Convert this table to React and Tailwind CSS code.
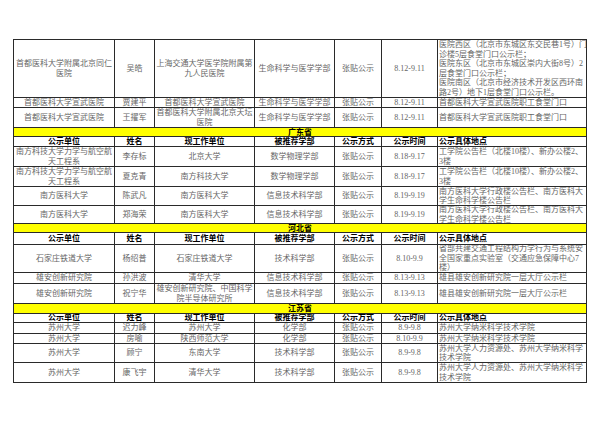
import React from "react";

// column widths in px: 公示单位 / 姓名 / 现工作单位 / 被推荐学部 / 公示方式 / 公示时间 / 公示具体地点
const cols = "grid-cols-[101px_40px_100px_80px_47px_56px_149px]";

const rows = [
  { h: "h-[58px]", c: [["首都医科大学附属北京同仁", "医院"], ["吴皓"], ["上海交通大学医学院附属第", "九人民医院"], ["生命科学与医学学部"], ["张贴公示"], ["8.12-9.11"], ["医院西区（北京市东城区东交民巷1号）门", "诊楼5层食堂门口公示栏；", "医院东区（北京市东城区崇内大街8号）2", "层食堂门口公示栏；", "医院南区（北京市经济技术开发区西环南", "路2号）地下1层食堂门口公示栏。"]] },
  { h: "h-[10px]", c: [["首都医科大学宣武医院"], ["贾建平"], ["首都医科大学宣武医院"], ["生命科学与医学学部"], ["张贴公示"], ["8.12-9.11"], ["首都医科大学宣武医院职工食堂门口"]] },
  { h: "h-[20px]", c: [["首都医科大学宣武医院"], ["王擢军"], ["首都医科大学附属北京天坛", "医院"], ["生命科学与医学学部"], ["张贴公示"], ["8.12-9.11"], ["首都医科大学宣武医院职工食堂门口"]] },
  { prov: "广东省", h: "h-[9px]" },
  { head: true, h: "h-[10px]" },
  { h: "h-[20px]", c: [["南方科技大学力学与航空航", "天工程系"], ["李存标"], ["北京大学"], ["数学物理学部"], ["张贴公示"], ["8.18-9.17"], ["工学院公告栏（北楼10楼）、新办公楼2、", "3楼"]] },
  { h: "h-[20px]", c: [["南方科技大学力学与航空航", "天工程系"], ["夏克青"], ["南方科技大学"], ["数学物理学部"], ["张贴公示"], ["8.18-9.17"], ["工学院公告栏（北楼10楼）、新办公楼2、", "3楼"]] },
  { h: "h-[19px]", c: [["南方医科大学"], ["陈武凡"], ["南方医科大学"], ["信息技术科学部"], ["张贴公示"], ["8.19-9.19"], ["南方医科大学行政楼公告栏、南方医科大", "学生命科学楼公告栏"]] },
  { h: "h-[18px]", c: [["南方医科大学"], ["郑海荣"], ["南方医科大学"], ["信息技术科学部"], ["张贴公示"], ["8.19-9.19"], ["南方医科大学行政楼公告栏、南方医科大", "学生命科学楼公告栏"]] },
  { prov: "河北省", h: "h-[9px]" },
  { head: true, h: "h-[12px]" },
  { h: "h-[28px]", c: [["石家庄铁道大学"], ["杨绍普"], ["石家庄铁道大学"], ["技术科学部"], ["张贴公示"], ["8.10-9.9"], ["省部共建交通工程结构力学行为与系统安", "全国家重点实验室（交通应急保障中心7", "楼）"]] },
  { h: "h-[11px]", c: [["雄安创新研究院"], ["孙洪波"], ["清华大学"], ["信息技术科学部"], ["张贴公示"], ["8.13-9.13"], ["雄县雄安创新研究院一层大厅公示栏"]] },
  { h: "h-[20px]", c: [["雄安创新研究院"], ["祝宁华"], ["雄安创新研究院、中国科学", "院半导体研究所"], ["信息技术科学部"], ["张贴公示"], ["8.13-9.13"], ["雄县雄安创新研究院一层大厅公示栏"]] },
  { prov: "江苏省", h: "h-[10px]" },
  { head: true, h: "h-[9px]" },
  { h: "h-[11px]", c: [["苏州大学"], ["迟力峰"], ["苏州大学"], ["化学部"], ["张贴公示"], ["8.9-9.8"], ["苏州大学纳米科学技术学院"]] },
  { h: "h-[10px]", c: [["苏州大学"], ["房喻"], ["陕西师范大学"], ["化学部"], ["张贴公示"], ["8.10-9.9"], ["苏州大学纳米科学技术学院"]] },
  { h: "h-[19px]", c: [["苏州大学"], ["顾宁"], ["东南大学"], ["技术科学部"], ["张贴公示"], ["8.9-9.8"], ["苏州大学人力资源处、苏州大学纳米科学", "技术学院"]] },
  { h: "h-[20px]", c: [["苏州大学"], ["康飞宇"], ["清华大学"], ["技术科学部"], ["张贴公示"], ["8.9-9.8"], ["苏州大学人力资源处、苏州大学纳米科学", "技术学院"]] },
];

const headers = ["公示单位", "姓名", "现工作单位", "被推荐学部", "公示方式", "公示时间", "公示具体地点"];

function Cell({ lines, last, bold }) {
  return (
    <div
      className={
        "border-r border-b border-[#2a2a2a] overflow-hidden flex items-center whitespace-nowrap leading-[9.5px] " +
        (last ? "justify-start text-left pl-[1px]" : "justify-center text-center") +
        (bold ? " font-bold text-black" : " text-[#666]")
      }
    >
      <div>
        {lines.map((l, i) => (
          <React.Fragment key={i}>
            {i > 0 && <br />}
            {l}
          </React.Fragment>
        ))}
      </div>
    </div>
  );
}

export default function App() {
  return (
    <div className="w-[599px] h-[423px] bg-white pt-[39px] pl-[13px] text-[8px] font-['Liberation_Serif','Noto_Sans_CJK_SC',serif]">
      <div className="w-[574px] border-l border-t border-[#2a2a2a]">
        {rows.map((r, i) => {
          if (r.prov) {
            return (
              <div
                key={i}
                className={`${r.h} bg-[#ffff00] border-r border-b border-[#2a2a2a] flex items-center justify-center font-bold text-black leading-[9px] overflow-hidden`}
              >
                {r.prov}
              </div>
            );
          }
          if (r.head) {
            return (
              <div key={i} className={`grid ${cols} ${r.h}`}>
                {headers.map((t, j) => (
                  <Cell key={j} lines={[t]} last={j === 6} bold />
                ))}
              </div>
            );
          }
          return (
            <div key={i} className={`grid ${cols} ${r.h}`}>
              {r.c.map((lines, j) => (
                <Cell key={j} lines={lines} last={j === 6} />
              ))}
            </div>
          );
        })}
      </div>
    </div>
  );
}
